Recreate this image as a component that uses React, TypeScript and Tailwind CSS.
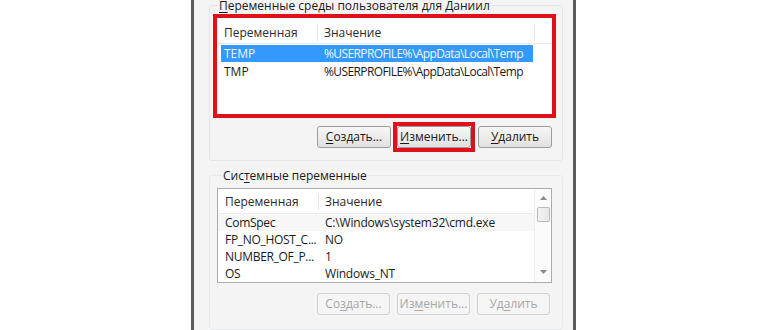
import React from "react";

const font = { fontFamily: '"Open Sans", "Noto Sans", sans-serif' };

function Btn({ children, disabled }: { children: React.ReactNode; disabled?: boolean }) {
  return (
    <div
      className={
        disabled
          ? "flex h-[22px] w-[73px] items-center justify-center rounded-[3px] border border-[#cfcfcf] bg-[#f5f5f5] text-[12px] text-[#a8a8a8]"
          : "flex h-[22px] w-[74px] items-center justify-center rounded-[3px] border border-[#9c9c9c] bg-gradient-to-b from-[#f7f7f7] to-[#e1e1e1] text-[12px] text-[#1a1a1a]"
      }
    >
      {children}
    </div>
  );
}

function U({ children }: { children: React.ReactNode }) {
  return <span className="underline underline-offset-2">{children}</span>;
}

const sysRows = [
  { name: "ComSpec", value: "C:\\Windows\\system32\\cmd.exe" },
  { name: "FP_NO_HOST_C...", value: "NO" },
  { name: "NUMBER_OF_P...", value: "1" },
  { name: "OS", value: "Windows_NT" },
];

export default function App() {
  return (
    <div className="flex h-[330px] w-[770px] overflow-hidden bg-white" style={font}>
      <div className="ml-[191px] flex h-full w-[385px] shrink-0 flex-col border-x-[3px] border-[#5c5c5c] bg-[#f4f4f4] pl-[15px] pr-[10px]">
        {/* user variables */}
        <fieldset className="-mt-[2px] rounded-[3px] border border-[#e3e6e8] pb-[8px] pl-[3px] pr-[6px]">
          <legend className="ml-[5px] px-[1px] text-[12px] leading-[15px] text-[#1a1a1a]">
            <U>П</U>еременные среды пользователя для Даниил
          </legend>
          <div className="mt-[1px] h-[104px] w-full border-4 border-[#e0101a] bg-white">
            <div className="flex h-[26px] border-b border-[#e8e8e8] pt-[4px] text-[12px] text-[#2a2a2a]">
              <div className="flex w-[100px] shrink-0 items-center pl-[7px]">Переменная</div>
              <div className="my-[2px] w-px bg-[#e3e3e3]" />
              <div className="flex w-[216px] shrink-0 items-center pl-[6px]">Значение</div>
              <div className="my-[2px] w-px bg-[#e3e3e3]" />
            </div>
            <div className="mt-[1px] flex flex-col gap-[1px] pl-[4px] text-[12px]">
              <div className="flex h-[17px] w-[312px] items-center bg-[#3399ff] text-[#eef6ff]">
                <div className="w-[97px] shrink-0 pl-[3px]">TEMP</div>
                <div className="whitespace-nowrap pl-[6px] tracking-[-0.6px]">%USERPROFILE%\AppData\Local\Temp</div>
              </div>
              <div className="flex h-[17px] w-[312px] items-center text-[#1a1a1a]">
                <div className="w-[97px] shrink-0 pl-[3px]">TMP</div>
                <div className="whitespace-nowrap pl-[6px] tracking-[-0.6px]">%USERPROFILE%\AppData\Local\Temp</div>
              </div>
            </div>
          </div>
          <div className="mt-[4px] flex items-center justify-end pr-[4px]">
            <div className="mr-[2px]">
              <Btn>
                <U>С</U>оздать...
              </Btn>
            </div>
            <div className="mr-[3px] border-4 border-[#e0101a]">
              <Btn>
                <U>И</U>зменить...
              </Btn>
            </div>
            <Btn>
              <U>У</U>далить
            </Btn>
          </div>
        </fieldset>

        {/* system variables */}
        <fieldset className="mt-[7px] flex-1 rounded-[3px] border border-[#e8eaec] pl-[7px] pr-[10px]">
          <legend className="ml-[5px] px-[1px] text-[12px] leading-[15px] text-[#1a1a1a]">
            Сис<U>т</U>емные переменные
          </legend>
          <div className="mt-[5px] flex h-[95px] w-[335px] border border-[#a9adb3] bg-white">
            <div className="flex flex-1 flex-col">
              <div className="flex h-[25px] border-b border-[#ececec] pt-[2px] text-[12px] text-[#2a2a2a]">
                <div className="flex w-[100px] shrink-0 items-center pl-[7px]">Переменная</div>
                <div className="my-[3px] w-px bg-[#e3e3e3]" />
                <div className="flex items-center pl-[6px]">Значение</div>
              </div>
              {sysRows.map((r, i) => (
                <div
                  key={r.name}
                  className={
                    "flex h-[17px] items-center text-[12px] text-[#1a1a1a] " +
                    (i === 0 ? "bg-[#f7f7f7]" : "")
                  }
                >
                  <div className="w-[100px] shrink-0 pl-[7px] tracking-[-0.3px]">{r.name}</div>
                  <div className="pl-[7px] tracking-[-0.2px]">{r.value}</div>
                </div>
              ))}
            </div>
            <div className="flex w-[17px] flex-col items-center border-l border-[#efefef] bg-[#fbfbfb]">
              <div className="flex h-[17px] items-center">
                <svg width="7" height="4" viewBox="0 0 7 4">
                  <path d="M0 4 L3.5 0 L7 4 Z" fill="#8a8a8a" />
                </svg>
              </div>
              <div className="mt-[1px] h-[15px] w-[13px] rounded-[2px] border border-[#b9b9b9] bg-gradient-to-r from-[#f4f4f4] to-[#e6e6e6]" />
              <div className="flex-1" />
              <div className="flex h-[20px] items-center">
                <svg width="7" height="4" viewBox="0 0 7 4">
                  <path d="M0 0 L3.5 4 L7 0 Z" fill="#8a8a8a" />
                </svg>
              </div>
            </div>
          </div>
          <div className="mt-[10px] flex items-center justify-end gap-[7px] pr-[2px]">
            <Btn disabled>
              Со<U>з</U>дать...
            </Btn>
            <Btn disabled>
              Из<U>м</U>енить...
            </Btn>
            <Btn disabled>
              Уд<U>а</U>лить
            </Btn>
          </div>
        </fieldset>
      </div>
    </div>
  );
}
